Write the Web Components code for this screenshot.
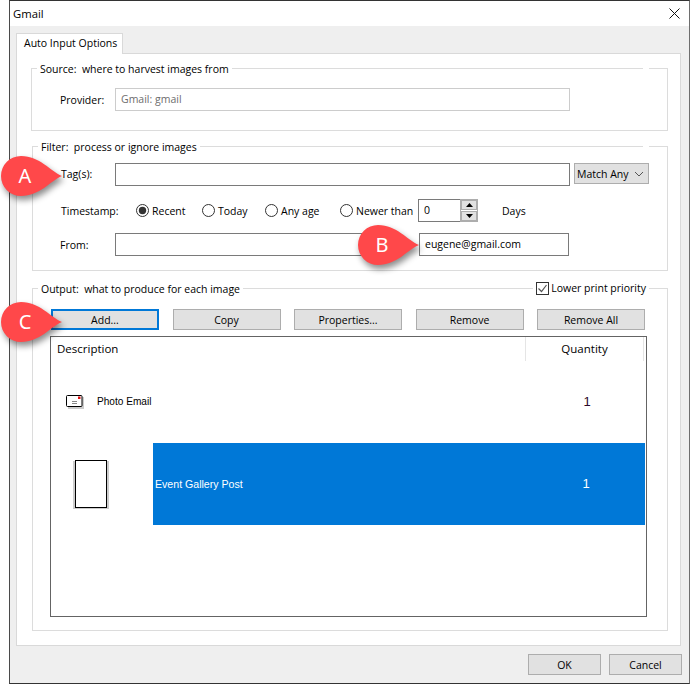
<!DOCTYPE html>
<html lang="en"><head><meta charset="utf-8"><title>Gmail</title>
<style>
html,body{margin:0;padding:0;background:#fff;}
body{position:relative;width:690px;height:684px;overflow:hidden;padding-left:9px;box-sizing:border-box;
 font:10.5px/16px "Open Sans","Noto Sans",sans-serif;color:#000;}
x-group.src{margin-left:-1px;height:63px;margin-bottom:15px;}
x-group.flt{height:125px;margin-bottom:17px;}
x-group.out{height:343px;}
.row{display:flex;align-items:center;}
.l1{width:54px;}
.prov{margin:12px 0 0 28px;}
.r1{margin:9px 0 0 28px;align-items:flex-start;}
.r1 .l1{line-height:23px;}
.r2{margin:13px 0 0 28px;height:23px;}
.r2 .l2{width:75px;}
.r3{margin:11px 0 0 27px;}
.r3 .l1{width:55px;}
x-field.w455{width:455px;}
x-field.w260{width:260px;}
x-field.w150{width:150px;margin-left:44px;}
x-combo{margin-left:4px;}
x-radio.a{width:66px;}x-radio.b{width:63px;}x-radio.c{width:75px;}x-radio.d{width:78px;}
x-spin{margin-right:24px;}
.btns{display:flex;gap:13.5px;margin:13px 0 0 18px;}
x-btn.wide{width:108px;height:21px;}
x-list{margin:6px 0 0 17px;}
</style></head>
<body>
<x-window heading="Gmail">
  <x-tabs label="Auto Input Options">
    <x-group class="src" legend="Source:  where to harvest images from">
      <div class="row prov"><span class="l1" style="width:55px">Provider:</span><x-field class="w455" disabled>Gmail: gmail</x-field></div>
    </x-group>
    <x-group class="flt" legend="Filter:  process or ignore images">
      <div class="row r1"><span class="l1">Tag(s):</span><x-field class="w455"></x-field><x-combo>Match Any</x-combo></div>
      <div class="row r2"><span class="l2">Timestamp:</span>
        <x-radio class="a" checked>Recent</x-radio><x-radio class="b">Today</x-radio><x-radio class="c">Any age</x-radio><x-radio class="d">Newer than</x-radio>
        <x-spin>0</x-spin><span>Days</span></div>
      <div class="row r3"><span class="l1">From:</span><x-field class="w260"></x-field><x-field class="w150">eugene@gmail.com</x-field></div>
    </x-group>
    <x-group class="out" legend="Output:  what to produce for each image">
      <x-check slot="end">Lower print priority</x-check>
      <div class="btns"><x-btn class="wide" focused>Add...</x-btn><x-btn class="wide">Copy</x-btn><x-btn class="wide">Properties...</x-btn><x-btn class="wide">Remove</x-btn><x-btn class="wide">Remove All</x-btn></div>
      <x-list>
        <x-item kind="email" name="Photo Email" qty="1"></x-item>
        <x-item kind="page" name="Event Gallery Post" qty="1" selected></x-item>
      </x-list>
    </x-group>
  </x-tabs>
  <x-btn slot="footer" style="width:73px;height:21px">OK</x-btn>
  <x-btn slot="footer" style="width:73px;height:21px">Cancel</x-btn>
</x-window>
<x-callout style="left:1px;top:156px">A</x-callout>
<x-callout style="left:358px;top:225px">B</x-callout>
<x-callout style="left:1px;top:302px">C</x-callout>
<script>
function def(name, html, init){
  customElements.define(name, class extends HTMLElement{
    constructor(){super();const s=this.attachShadow({mode:'open'});s.innerHTML=typeof html==='function'?html(this):html;}
    connectedCallback(){ if(init) init(this,this.shadowRoot); }
  });
}
def('x-window',`<style>
:host{display:flex;flex-direction:column;width:681px;height:684px;box-sizing:border-box;border:1px solid #4a4a4a;border-right-color:#6e6e6e;border-top-color:#333;border-bottom-color:#333;background:#efefef;}
.t{height:25px;background:#fff;display:flex;align-items:center;justify-content:space-between;padding:0 9px 0 3px;font-size:11.3px;}
.b{flex:1;padding:7px 8px 0 6px;display:flex;flex-direction:column;}
.f{display:flex;justify-content:flex-end;gap:8px;margin:8px -1px 0 0;}
svg{display:block}
</style><div class="t"><span id="h"></span><svg width="11" height="11" viewBox="0 0 11 11"><path d="M.5.5l10 10M10.5.5l-10 10" stroke="#111" stroke-width="1" fill="none"/></svg></div>
<div class="b"><slot></slot><div class="f"><slot name="footer"></slot></div></div>`,(e,s)=>{s.getElementById('h').textContent=e.getAttribute('heading');});
def('x-tabs',`<style>
:host{display:block;}
.tab{position:relative;z-index:1;width:107px;box-sizing:border-box;background:#fff;border:1px solid #d9d9d9;border-bottom:0;margin-bottom:-1px;height:21px;line-height:19px;padding-left:7px;white-space:nowrap;}
.p{height:593px;box-sizing:border-box;background:#fff;border:1px solid #d9d9d9;padding:14px 12px 0 15px;}
</style><div class="tab" id="l"></div><div class="p"><slot></slot></div>`,(e,s)=>{s.getElementById('l').textContent=e.getAttribute('label');});
def('x-group',`<style>
:host{display:block;box-sizing:border-box;border:1px solid #dcdcdc;}
.h{display:flex;justify-content:space-between;margin-top:-9px;height:16px;}
.lg{background:#fff;padding:1px 3px 0;margin-left:5px;white-space:pre;}
.e{background:#fff;margin-right:18px;padding:0 3px;display:flex}
</style><div class="h"><span class="lg" id="l"></span><span class="e"><slot name="end"></slot></span></div><slot></slot>`,(e,s)=>{s.getElementById('l').textContent=e.getAttribute('legend');});
def('x-field',`<style>
:host{display:block;box-sizing:border-box;height:23px;border:1px solid #7a7a7a;line-height:20px;padding-left:5px;background:#fff;color:#000;flex:none;}
:host([disabled]){border-color:#ccc;color:#6d6d6d;}
</style><slot></slot>`);
def('x-combo',`<style>
:host{display:flex;align-items:center;justify-content:space-between;box-sizing:border-box;width:75px;height:21px;background:#e1e1e1;border:1px solid #adadad;padding:0 4px 0 2px;flex:none;white-space:nowrap;}
svg{display:block}
</style><slot></slot><svg width="10" height="6" viewBox="0 0 10 6"><path d="M1 1l4 4 4-4" fill="none" stroke="#555"/></svg>`);
def('x-radio',()=>`<style>
:host{display:flex;align-items:center;flex:none;white-space:nowrap;}
svg{display:block;margin-right:3px;flex:none}
</style><svg width="13" height="13" viewBox="0 0 13 13"><circle cx="6.5" cy="6.5" r="6" fill="#fff" stroke="#333"/><circle id="d" cx="6.5" cy="6.5" r="3.7" fill="#333" style="display:none"/></svg><slot></slot>`,(e,s)=>{if(e.hasAttribute('checked'))s.getElementById('d').style.display='';});
def('x-spin',`<style>
:host{display:flex;box-sizing:border-box;width:60px;height:23px;flex:none;}
.v{width:42px;box-sizing:border-box;border:1px solid #7a7a7a;border-right:0;line-height:20px;padding-left:5px;}
.s{width:18px;box-sizing:border-box;border:1px solid #adadad;display:flex;flex-direction:column;gap:1px;background:#fff;}
.s div{flex:1;background:#e1e1e1;border:1px solid #adadad;display:flex;align-items:center;justify-content:center;margin:0;}
svg{display:block}
</style><div class="v"><slot></slot></div><div class="s"><div><svg width="7" height="4" viewBox="0 0 7 4"><path d="M3.5 0L7 4H0z"/></svg></div><div><svg width="7" height="4" viewBox="0 0 7 4"><path d="M0 0h7L3.5 4z"/></svg></div></div>`);
def('x-check',`<style>
:host{display:flex;align-items:center;white-space:nowrap;}
svg{display:block;margin-right:2px;}
</style><svg width="13" height="13" viewBox="0 0 13 13"><rect x=".5" y=".5" width="12" height="12" fill="#fff" stroke="#333"/><path d="M2.5 6.5l3 3 5-6.5" fill="none" stroke="#555" stroke-width="1.2"/></svg><slot></slot>`);
def('x-btn',`<style>
:host{display:flex;align-items:center;justify-content:center;box-sizing:border-box;background:#e1e1e1;border:1px solid #adadad;flex:none;white-space:nowrap;}
:host([focused]){border:2px solid #0078d7;}
</style><slot></slot>`);
def('x-list',`<style>
:host{display:block;box-sizing:border-box;width:597px;height:281px;border:1px solid #646464;background:#fff;}
.hd{display:flex;height:24px;line-height:24px;font-size:11.5px;}
.d{width:475px;padding-left:6px;box-sizing:border-box;border-right:1px solid #e5e5e5;}
.q{width:118px;box-sizing:border-box;text-align:center;border-right:1px solid #e5e5e5;}
</style><div class="hd"><div class="d">Description</div><div class="q">Quantity</div></div><slot></slot>`);
def('x-item',(e)=>{
  const k=e.getAttribute('kind'),n=e.getAttribute('name'),q=e.getAttribute('qty');
  const icon=k==='email'
   ?`<svg class="ic" style="margin-left:15px;margin-right:13px" width="18" height="14" viewBox="0 0 18 14"><rect x="2" y="2" width="16" height="12" fill="#ccc"/><rect x=".5" y=".5" width="15.5" height="11" rx="1" fill="#fff" stroke="#000"/><rect x="12" y="1.5" width="2.5" height="2.5" fill="#e01010"/><path d="M6 6.5h5M6 8.5h5" stroke="#888"/></svg>`
   :`<div class="pg"></div>`;
  return `<style>
  :host{display:flex;align-items:center;height:82px;font:10.1px/14px "Liberation Sans",sans-serif;}
  :host([selected]){font-size:10.6px;}
  .ic{display:block;flex:none}
  .pg{width:32px;height:48px;box-sizing:border-box;border:1.5px solid #000;background:#fff;margin-left:24px;margin-right:46px;flex:none;box-shadow:-2px 1px 0 #ccc,2px 1px 0 #ccc;}
  .m{flex:1;display:flex;align-items:center;height:100%;}
  .n{flex:1;}
  .q{width:118px;text-align:center;font-size:13px;color:#2a0a2a;}
  :host([selected]) .m{background:#0078d7;color:#fff;margin-right:1px;}
  :host([selected]) .n{padding-left:2px;}
  :host([selected]) .q{color:#fff;}
  </style>${icon}<div class="m"><div class="n">${n}</div><div class="q">${q}</div></div>`;
});
def('x-callout',`<style>
:host{position:absolute;display:flex;align-items:center;width:61px;height:40px;color:#fff;font:20px/40px "Noto Sans",sans-serif;}
svg{position:absolute;left:0;top:0;overflow:visible;filter:drop-shadow(2px 4px 3px rgba(0,0,0,.45));}
span{position:relative;width:48px;text-align:center;}
</style><svg width="61" height="40" viewBox="0 0 61 40"><path d="M61 20C49 15 39 0 20 0A20 20 0 0 0 20 40C39 40 49 25 61 20Z" fill="#ff484a"/></svg><span><slot></slot></span>`);
</script>
</body></html>
